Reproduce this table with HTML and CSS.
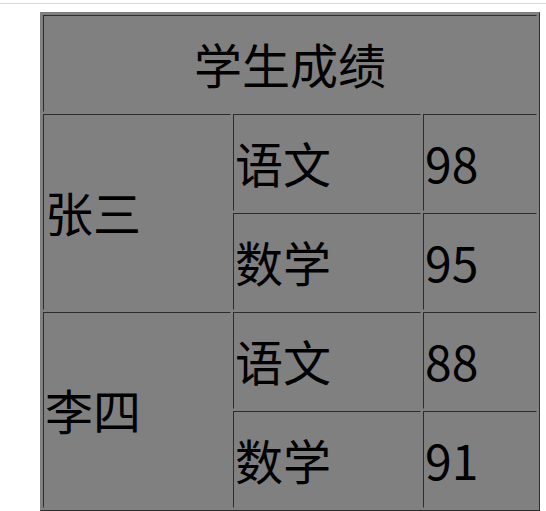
FILE: index.html
```html
<!DOCTYPE html>
<html lang="zh-CN">
<head>
<meta charset="utf-8">
<title>学生成绩</title>
<link rel="stylesheet" href="styles.css">
</head>
<body>
<div class="topline"></div>
<table class="scores">
  <colgroup>
    <col class="c-name">
    <col class="c-subject">
    <col class="c-score">
  </colgroup>
  <tr>
    <td class="title" colspan="3">学生成绩</td>
  </tr>
  <tr>
    <td rowspan="2">张三</td>
    <td>语文</td>
    <td>98</td>
  </tr>
  <tr>
    <td>数学</td>
    <td>95</td>
  </tr>
  <tr>
    <td rowspan="2">李四</td>
    <td>语文</td>
    <td>88</td>
  </tr>
  <tr>
    <td>数学</td>
    <td>91</td>
  </tr>
</table>
</body>
</html>
```

FILE: styles.css
```css
html, body {
  margin: 0;
  padding: 0;
  background: #ffffff;
}

body {
  font-family: "Noto Sans CJK SC", "Noto Sans", sans-serif;
  color: #000000;
  overflow: hidden;
}

.topline {
  height: 0;
  margin-top: 3px;
  border-top: 1px solid #dcdcdc;
}

.scores {
  margin-top: 8px;
  margin-left: 40px;
  width: 500px;
  table-layout: fixed;
  border-collapse: separate;
  border-spacing: 2px;
  border: 1px outset #808080;
  background: #808080;
  font-size: 48px;
}

.c-name { width: 188px; }
.c-subject { width: 188px; }
.c-score { width: 114px; }

.scores tr {
  height: 97px;
}

.scores td {
  border: 1px inset #808080;
  padding: 1px;
  text-align: left;
  vertical-align: middle;
  line-height: 1.2;
  white-space: nowrap;
}

.scores td.title {
  text-align: center;
}
```
